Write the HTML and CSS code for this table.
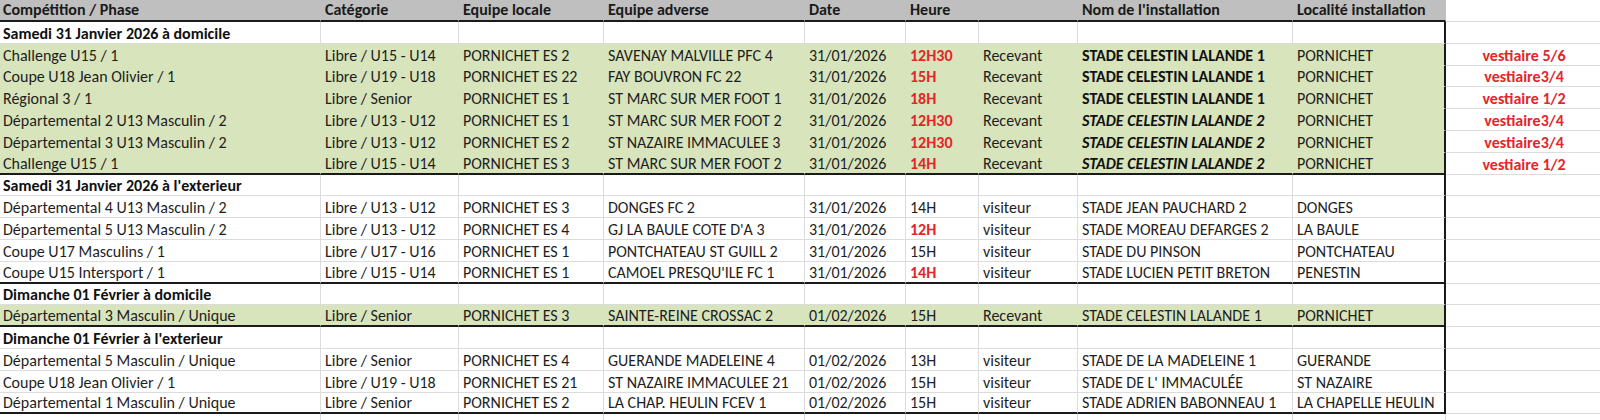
FILE: index.html
```html
<!DOCTYPE html>
<html lang="fr">
<head>
<meta charset="utf-8">
<title>Planning matchs</title>
<link rel="stylesheet" href="styles.css">
</head>
<body>
<table class="sheet">
  <colgroup>
    <col class="c-comp"><col class="c-cat"><col class="c-loc"><col class="c-adv"><col class="c-date"><col class="c-heure"><col class="c-statut"><col class="c-inst"><col class="c-ville"><col class="c-vest">
  </colgroup>
  <thead>
    <tr class="head">
      <th>Compétition / Phase</th><th>Catégorie</th><th>Equipe locale</th><th>Equipe adverse</th><th>Date</th><th>Heure</th><th></th><th>Nom de l'installation</th><th class="last">Localité installation</th><th class="out"></th>
    </tr>
  </thead>
  <tbody>
    <tr class="title"><td>Samedi 31 Janvier 2026 à domicile</td><td></td><td></td><td></td><td></td><td></td><td></td><td></td><td class="last"></td><td class="out"></td></tr>
    <tr class="home"><td>Challenge U15 / 1</td><td>Libre / U15 - U14</td><td>PORNICHET ES 2</td><td>SAVENAY MALVILLE PFC 4</td><td>31/01/2026</td><td class="red">12H30</td><td>Recevant</td><td class="b">STADE CELESTIN LALANDE 1</td><td class="last">PORNICHET</td><td class="out vest">vestiaire 5/6</td></tr>
    <tr class="home"><td>Coupe U18 Jean Olivier / 1</td><td>Libre / U19 - U18</td><td>PORNICHET ES 22</td><td>FAY BOUVRON FC 22</td><td>31/01/2026</td><td class="red">15H</td><td>Recevant</td><td class="b">STADE CELESTIN LALANDE 1</td><td class="last">PORNICHET</td><td class="out vest">vestiaire3/4</td></tr>
    <tr class="home"><td>Régional 3 / 1</td><td>Libre / Senior</td><td>PORNICHET ES 1</td><td>ST MARC SUR MER FOOT 1</td><td>31/01/2026</td><td class="red">18H</td><td>Recevant</td><td class="b">STADE CELESTIN LALANDE 1</td><td class="last">PORNICHET</td><td class="out vest">vestiaire 1/2</td></tr>
    <tr class="home"><td>Départemental 2 U13 Masculin / 2</td><td>Libre / U13 - U12</td><td>PORNICHET ES 1</td><td>ST MARC SUR MER FOOT 2</td><td>31/01/2026</td><td class="red">12H30</td><td>Recevant</td><td class="bi">STADE CELESTIN LALANDE 2</td><td class="last">PORNICHET</td><td class="out vest">vestiaire3/4</td></tr>
    <tr class="home"><td>Départemental 3 U13 Masculin / 2</td><td>Libre / U13 - U12</td><td>PORNICHET ES 2</td><td>ST NAZAIRE IMMACULEE 3</td><td>31/01/2026</td><td class="red">12H30</td><td>Recevant</td><td class="bi">STADE CELESTIN LALANDE 2</td><td class="last">PORNICHET</td><td class="out vest">vestiaire3/4</td></tr>
    <tr class="home end"><td>Challenge U15 / 1</td><td>Libre / U15 - U14</td><td>PORNICHET ES 3</td><td>ST MARC SUR MER FOOT 2</td><td>31/01/2026</td><td class="red">14H</td><td>Recevant</td><td class="bi">STADE CELESTIN LALANDE 2</td><td class="last">PORNICHET</td><td class="out vest">vestiaire 1/2</td></tr>

    <tr class="title"><td>Samedi 31 Janvier 2026 à l'exterieur</td><td></td><td></td><td></td><td></td><td></td><td></td><td></td><td class="last"></td><td class="out"></td></tr>
    <tr><td>Départemental 4 U13 Masculin / 2</td><td>Libre / U13 - U12</td><td>PORNICHET ES 3</td><td>DONGES FC 2</td><td>31/01/2026</td><td>14H</td><td>visiteur</td><td>STADE JEAN PAUCHARD 2</td><td class="last">DONGES</td><td class="out"></td></tr>
    <tr><td>Départemental 5 U13 Masculin / 2</td><td>Libre / U13 - U12</td><td>PORNICHET ES 4</td><td>GJ LA BAULE COTE D'A 3</td><td>31/01/2026</td><td class="red">12H</td><td>visiteur</td><td>STADE MOREAU DEFARGES 2</td><td class="last">LA BAULE</td><td class="out"></td></tr>
    <tr><td>Coupe U17 Masculins / 1</td><td>Libre / U17 - U16</td><td>PORNICHET ES 1</td><td>PONTCHATEAU ST GUILL 2</td><td>31/01/2026</td><td>15H</td><td>visiteur</td><td>STADE DU PINSON</td><td class="last">PONTCHATEAU</td><td class="out"></td></tr>
    <tr class="end"><td>Coupe U15 Intersport / 1</td><td>Libre / U15 - U14</td><td>PORNICHET ES 1</td><td>CAMOEL PRESQU'ILE FC 1</td><td>31/01/2026</td><td class="red">14H</td><td>visiteur</td><td>STADE LUCIEN PETIT BRETON</td><td class="last">PENESTIN</td><td class="out"></td></tr>

    <tr class="title"><td>Dimanche 01 Février à domicile</td><td></td><td></td><td></td><td></td><td></td><td></td><td></td><td class="last"></td><td class="out"></td></tr>
    <tr class="home end"><td>Départemental 3 Masculin / Unique</td><td>Libre / Senior</td><td>PORNICHET ES 3</td><td>SAINTE-REINE CROSSAC 2</td><td>01/02/2026</td><td>15H</td><td>Recevant</td><td>STADE CELESTIN LALANDE 1</td><td class="last">PORNICHET</td><td class="out"></td></tr>

    <tr class="title"><td>Dimanche 01 Février à l'exterieur</td><td></td><td></td><td></td><td></td><td></td><td></td><td></td><td class="last"></td><td class="out"></td></tr>
    <tr><td>Départemental 5 Masculin / Unique</td><td>Libre / Senior</td><td>PORNICHET ES 4</td><td>GUERANDE MADELEINE 4</td><td>01/02/2026</td><td>13H</td><td>visiteur</td><td>STADE DE LA MADELEINE 1</td><td class="last">GUERANDE</td><td class="out"></td></tr>
    <tr><td>Coupe U18 Jean Olivier / 1</td><td>Libre / U19 - U18</td><td>PORNICHET ES 21</td><td>ST NAZAIRE IMMACULEE 21</td><td>01/02/2026</td><td>15H</td><td>visiteur</td><td>STADE DE L' IMMACULÉE</td><td class="last">ST NAZAIRE</td><td class="out"></td></tr>
    <tr class="end"><td>Départemental 1 Masculin / Unique</td><td>Libre / Senior</td><td>PORNICHET ES 2</td><td>LA CHAP. HEULIN FCEV 1</td><td>01/02/2026</td><td>15H</td><td>visiteur</td><td>STADE ADRIEN BABONNEAU 1</td><td class="last">LA CHAPELLE HEULIN</td><td class="out"></td></tr>

    <tr class="spare"><td></td><td></td><td></td><td></td><td></td><td></td><td></td><td></td><td class="last"></td><td class="out"></td></tr>
  </tbody>
</table>
</body>
</html>
```
FILE: styles.css
```css
html, body {
  margin: 0;
  padding: 0;
  background: #ffffff;
  overflow: hidden;
}

.sheet {
  table-layout: fixed;
  border-collapse: separate;
  border-spacing: 0;
  width: 1600px;
  font-family: Calibri, Carlito, Lato, "Liberation Sans", sans-serif;
  font-size: 16px;
  color: #1e1e1e;
}

.c-comp { width: 321px; }
.c-cat { width: 138px; }
.c-loc { width: 145px; }
.c-adv { width: 201px; }
.c-date { width: 101px; }
.c-heure { width: 73px; }
.c-statut { width: 99px; }
.c-inst { width: 215px; }
.c-ville { width: 153px; }
.c-vest { width: 154px; }

.sheet th,
.sheet td {
  box-sizing: border-box;
  padding: 0 2px 1px 3px;
  line-height: 16px;
  vertical-align: bottom;
  text-align: left;
  white-space: nowrap;
  overflow: hidden;
  border-right: 1px solid #dcdcdc;
  border-bottom: 1px solid #dcdcdc;
}

.sheet td:nth-child(n+2),
.sheet th:nth-child(n+2) { padding-left: 4px; }

/* header row */
.head { height: 22px; }
.head th {
  background: #bfbfbf;
  font-weight: 700;
  color: #1a1a1a;
  padding-bottom: 2px;
  border-right-color: #bfbfbf;
  border-bottom: 2px solid #1a1a1a;
}
.head th.out {
  background: #ffffff;
  border-bottom: 1px solid #dcdcdc;
  border-right: none;
}

.sheet tbody tr { height: 21.8px; }

/* group title rows */
.title td:first-child { font-weight: 700; color: #111; }

/* green "home" rows */
.home td { background: #d8e4bc; border-right-color: #d8e4bc; border-bottom-color: #d8e4bc; }
.home td.out { background: #ffffff; border-right-color: #dcdcdc; border-bottom-color: #dcdcdc; }

/* thick borders */
.sheet td.last { border-right: 2px solid #1a1a1a; }
.end td { border-bottom: 2px solid #1a1a1a; }
.end td.out { border-bottom: 1px solid #dcdcdc; }
.home.end td { border-bottom-color: #1a1a1a; }
.home.end td.out { border-bottom-color: #dcdcdc; }

.sheet td.out { border-right: none; }

.spare td { border-bottom: none; }
.spare td.last { border-right: 1px solid #dcdcdc; }

/* text styles */
.red { color: #e3262b; font-weight: 700; }
.b { font-weight: 700; color: #111; }
.bi { font-weight: 700; font-style: italic; color: #111; }
.sheet td.vest { color: #e3262b; font-weight: 700; text-align: center; }
```
